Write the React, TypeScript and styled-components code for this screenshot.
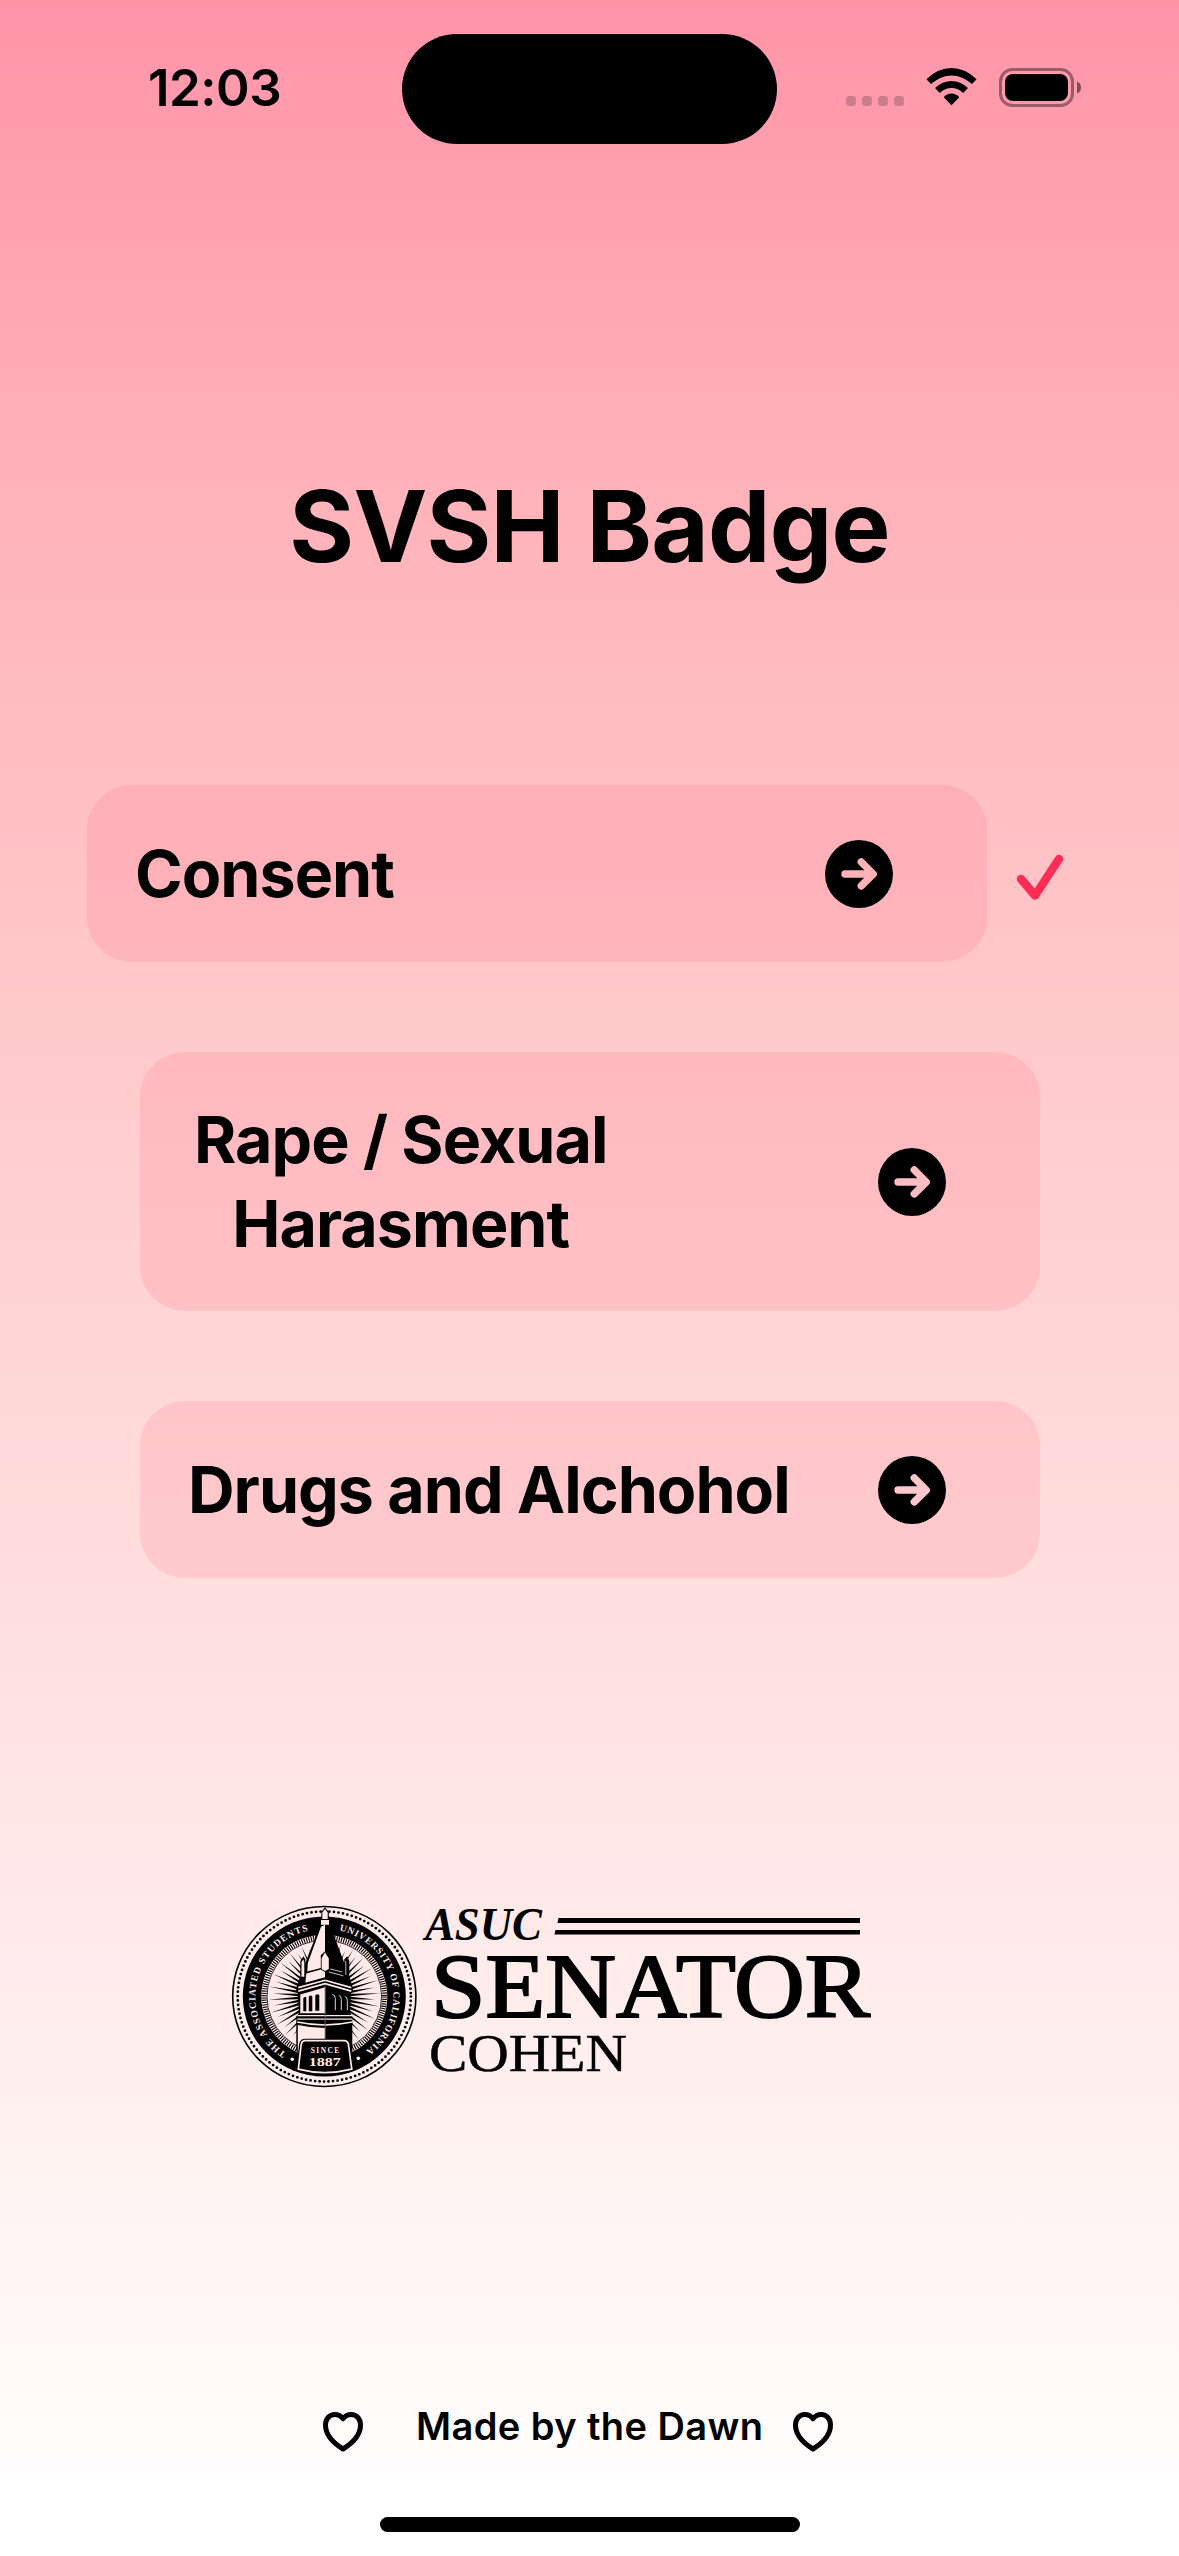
import React, { useId } from "react";
import styled, { createGlobalStyle } from "styled-components";

const Global = createGlobalStyle`
  *{box-sizing:border-box}
  html,body,#root{margin:0;padding:0}
  body{width:1179px;height:2556px;overflow:hidden;font-family:Inter,"Liberation Sans",sans-serif;color:#000}
`;

const Screen = styled.main`
  width: 1179px;
  height: 2556px;
  display: flex;
  flex-direction: column;
  align-items: center;
  background: linear-gradient(180deg, #ff94a9 0, #ffb2ba 480px, #ffc8cb 1000px, #ffdfde 1600px, #fffcfb 2440px, #fff 2500px);
`;

const StatusBar = styled.header`
  width: 100%;
  height: 145px;
  padding-top: 34px;
  display: grid;
  grid-template-columns: 402px 375px 1fr;
`;

const Clock = styled.time`
  padding: 21px 0 0 148px;
  font-size: 51px;
  line-height: 66px;
  font-weight: 600;
  letter-spacing: -0.5px;
`;

const Island = styled.div`
  height: 110px;
  border-radius: 55px;
  background: #000;
`;

const Indicators = styled.div`
  display: flex;
  align-items: flex-start;
  padding: 34px 0 0 69px;
`;

const Dots = styled.div`
  display: flex;
  gap: 6px;
  padding-top: 28px;
  margin-right: 22px;
`;

const Dot = styled.i`
  width: 10px;
  height: 10px;
  border-radius: 3.5px;
  background: rgba(0, 0, 0, 0.2);
`;

const Battery = styled.svg`
  margin-left: 22px;
`;

const Title = styled.h1`
  margin: 321px 0 0;
  height: 120px;
  font-size: 99px;
  line-height: 120px;
  font-weight: 700;
  letter-spacing: -0.75px;
  white-space: nowrap;
`;

const Topics = styled.section`
  width: 100%;
  margin-top: 199px;
  display: flex;
  flex-direction: column;
  gap: 90px;
`;

const TopicRow = styled.div<{ $start: number }>`
  display: flex;
  align-items: center;
  padding-left: ${(p) => p.$start}px;
`;

const Card = styled.button<{ $inset: number; $height: number }>`
  width: 900px;
  height: ${(p) => p.$height}px;
  padding: 0 94px 0 ${(p) => p.$inset}px;
  display: flex;
  align-items: center;
  justify-content: space-between;
  border: 0;
  border-radius: 45px;
  background: rgba(255, 45, 85, 0.11);
  font: inherit;
  color: inherit;
`;

const Label = styled.span`
  font-size: 64.5px;
  line-height: 84px;
  font-weight: 700;
  letter-spacing: -0.97px;
  text-align: center;
  white-space: pre-line;
`;

const Check = styled.svg`
  margin: 8px 0 0 29px;
`;

const Logo = styled.svg`
  display: block;
  width: 680px;
  height: 220px;
  margin: 312px 0 0 220px;
  align-self: flex-start;
`;

const Footer = styled.footer`
  width: 100%;
  height: 60px;
  margin-top: 287px;
  padding: 9px 0 0 323px;
  display: flex;
  align-items: center;
`;

const Credit = styled.span`
  width: 347px;
  margin: 0 30px 0 53px;
  font-size: 38px;
  line-height: 50px;
  font-weight: 600;
  white-space: nowrap;
  letter-spacing: 0.42px;
  padding-bottom: 12px;
`;

const HomeBar = styled.div`
  width: 420px;
  height: 15px;
  margin-top: 60px;
  border-radius: 8px;
  background: #000;
`;

const WifiIcon = () => (
  <svg width="51" height="38" viewBox="0 0 51 38">
    <path d="M0.4 11.2Q12 0 25.5 0Q39 0 50.6 11.2L46 16.1Q36.5 7.4 25.5 7.4Q14.5 7.4 5 16.1Z" />
    <path d="M9 20Q16.5 12.9 25.5 12.9Q34.5 12.9 42 20L37.2 25Q32 20 25.5 20Q19 20 13.8 25Z" />
    <path d="M17.7 29.2Q21 25.6 25.5 25.6Q30 25.6 33.3 29.2L25.5 37.2Z" />
  </svg>
);

const ArrowIcon = () => {
  const id = useId();
  return (
    <svg width="68" height="68" viewBox="0 0 68 68">
      <mask id={id}>
        <rect width="68" height="68" fill="#fff" />
        <path d="M20 34H47M36.3 22L48.2 34L36.3 45.8" fill="none" stroke="#000" strokeWidth="7.4" strokeLinecap="round" strokeLinejoin="round" />
      </mask>
      <circle cx="34" cy="34" r="34" mask={`url(#${id})`} />
    </svg>
  );
};

const HeartIcon = () => (
  <svg width="40" height="40" viewBox="0 0 40 40">
    <path d="M20 6.8C17.6 3.6 14.8 2.5 11.8 2.5C6.3 2.5 2.5 7 2.5 13C2.5 22.5 9.5 30.5 20 37C30.5 30.5 37.5 22.5 37.5 13C37.5 7 33.7 2.5 28.2 2.5C25.2 2.5 22.4 3.6 20 6.8Z" fill="none" stroke="#000" strokeWidth="5" strokeLinejoin="round" />
  </svg>
);

const CREAM = "#ffe9e9";
const RAY_COUNT = 52;
const rays = Array.from({ length: RAY_COUNT }, (_, i) => {
  const a = ((i + 0.5) * Math.PI * 2) / RAY_COUNT;
  const r = i % 2 ? 56 : 51;
  const w = 0.05;
  return `M${Math.cos(a) * r} ${Math.sin(a) * r}L${Math.cos(a - w) * 26} ${Math.sin(a - w) * 26}L${Math.cos(a + w) * 26} ${Math.sin(a + w) * 26}Z`;
}).join("");

const PLAQUE = "M-19 45H20Q23 45 24 48L27.5 74Q0 81 -26 74L-23 48Q-22 45 -19 45Z";

const Seal = () => (
  <g transform="translate(324.3 106.5) scale(1 .982)">
    <defs>
      <path id="arc-left" d="M-38.1 57.5A69 69 0 0 1 -13.5 -67.7" />
      <path id="arc-right" d="M14.9 -67.4A69 69 0 0 1 40.1 56.2" />
    </defs>
    <circle r="91.6" fill="none" stroke="#000" strokeWidth="1.6" />
    <circle r="86.6" fill="none" stroke="#000" strokeWidth="2.8" strokeLinecap="round" strokeDasharray="0 4.535" />
    <circle r="81.5" />
    <circle r="63" fill={CREAM} />
    <circle r="60.2" fill="none" stroke="#000" strokeWidth="5" strokeDasharray="1.100 1.264" />
    <circle r="57.3" fill={CREAM} stroke="#000" strokeWidth=".8" />
    <path d={rays} />
    <circle r="26.5" />
    <g fill={CREAM} fontFamily="Liberation Serif, serif" fontWeight="700" fontSize="9.6">
      <text><textPath href="#arc-left" textLength="160">THE ASSOCIATED STUDENTS</textPath></text>
      <text><textPath href="#arc-right" textLength="157">UNIVERSITY OF CALIFORNIA</textPath></text>
    </g>
    <circle cx="-32" cy="64" r="1.8" fill={CREAM} />
    <circle cx="34" cy="63" r="1.8" fill={CREAM} />
    {/* bell tower silhouette */}
    <path d="M.7 -91L-3 -86V-79H-4.5V-72L-19 -34V-38L-21 -41L-24 -36V-20L-28 -9V-5L-25.5 -2V17L-28 20V56H28V20L26 17V-2L28.5 -5V-9L25 -20V-36L23 -41L20 -38V-34L6 -72V-79H4.5V-86Z" />
    {/* lit left face of the spire and parapet */}
    <path d="M-3.3 -71L.7 -73V-46L-3.5 -42V-29L-17 -25.5L-16.5 -34Z" fill={CREAM} />
    <path d="M-22.8 -35L-21 -38L-20 -35V-20H-22.8Z" fill={CREAM} />
    <path d="M-18 -23.5L-3.5 -27.5L.7 -25V-19.5L-19 -14Z" fill={CREAM} />
    <path d="M-2.7 -28V-39L-1 -42L.7 -45L2.4 -42L4.5 -39V-28L.7 -26Z" fill={CREAM} />
    <path d="M-2 -79V-85.5L.7 -89L3.4 -85.5V-79ZM-3.3 -78H4.7V-73H-3.3Z" fill={CREAM} />
    <path d="M4.5 -25L19 -21M6 -28L18 -25M21.5 -36V-22" fill="none" stroke={CREAM} strokeWidth=".8" />
    <path d="M-26 -9L.7 -16.5L27 -9M-26 -5.5L.7 -13L27 -5.5" fill="none" stroke={CREAM} strokeWidth="1.7" />
    <path d="M-24 -2L.7 -9.5V17H-24Z" fill={CREAM} />
    <path d="M-21 15V2Q-19.5 -1 -18 1V15ZM-15.5 15V0Q-13.5 -2 -12 0V15ZM-9 14.5V-1Q-7 -3.5 -5 -1.5V14.5Z" />
    <path d="M-27 19.5H28M-27 23H28M-27 26Q0 32 28 26" fill="none" stroke={CREAM} strokeWidth="1.4" />
    <path d="M-26.5 29Q-13 32 .7 32V56H-26.5Z" fill={CREAM} />
    <path d="M8 -2Q11 -2 11 2V14M14.5 -1Q17 -1 17 3V14M20.5 0Q23 0 23 4V14" stroke={CREAM} strokeWidth=".9" fill="none" />
    <path d="M.9 -12V45" stroke="#666" strokeWidth="1" />
    <path d={PLAQUE} stroke="#000" strokeWidth="4.2" strokeLinejoin="round" />
    <path d={PLAQUE} stroke={CREAM} strokeWidth="1.7" />
    <g fill={CREAM} fontFamily="Liberation Serif, serif" fontWeight="700">
      <text x="-13.5" y="58" fontSize="7.5" textLength="28.5">SINCE</text>
      <text x="-15.5" y="70.5" fontSize="13.5" textLength="32" lengthAdjust="spacingAndGlyphs">1887</text>
    </g>
  </g>
);

const SenatorLogo = () => (
  <Logo viewBox="220 0 680 220" aria-label="ASUC Senator Cohen">
    <Seal />
    <g fontFamily="Liberation Serif, serif">
      <text x="425" y="50" fontSize="46" fontStyle="italic" fontWeight="700" textLength="117" lengthAdjust="spacingAndGlyphs">ASUC</text>
      <text x="431" y="127" fontSize="91" textLength="439" lengthAdjust="spacingAndGlyphs" stroke="#000" strokeWidth="2">SENATOR</text>
      <text x="429" y="181" fontSize="53" textLength="198" lengthAdjust="spacingAndGlyphs" stroke="#000" strokeWidth=".5">COHEN</text>
    </g>
    <path d="M558.5 28H860V33H557.5ZM555.5 40H860V44.5H554.5Z" />
  </Logo>
);

export default function App() {
  return (
    <Screen>
      <Global />
      <StatusBar>
        <Clock>12:03</Clock>
        <Island />
        <Indicators>
          <Dots><Dot /><Dot /><Dot /><Dot /></Dots>
          <WifiIcon />
          <Battery width="83" height="39" viewBox="0 0 83 39">
            <rect x="1.5" y="1.5" width="72" height="36" rx="12" fill="none" stroke="#000" strokeOpacity=".4" strokeWidth="3" />
            <rect x="6" y="6" width="63" height="27" rx="8" />
            <path d="M78 13.5Q82 15 82 19.5Q82 24 78 25.5Z" fillOpacity=".5" />
          </Battery>
        </Indicators>
      </StatusBar>
      <Title>SVSH Badge</Title>
      <Topics>
        <TopicRow $start={87}>
          <Card $inset={48} $height={177}>
            <Label>Consent</Label>
            <ArrowIcon />
          </Card>
          <Check width="48" height="48" viewBox="0 0 48 48">
            <path d="M5 25L19 41.5L43 5" fill="none" stroke="#ff2d55" strokeWidth="8.5" strokeLinecap="round" strokeLinejoin="round" />
          </Check>
        </TopicRow>
        <TopicRow $start={140}>
          <Card $inset={54} $height={259}>
            <Label>{"Rape / Sexual\nHarasment"}</Label>
            <ArrowIcon />
          </Card>
        </TopicRow>
        <TopicRow $start={140}>
          <Card $inset={48} $height={177}>
            <Label>Drugs and Alchohol</Label>
            <ArrowIcon />
          </Card>
        </TopicRow>
      </Topics>
      <SenatorLogo />
      <Footer>
        <HeartIcon />
        <Credit>Made by the Dawn</Credit>
        <HeartIcon />
      </Footer>
      <HomeBar />
    </Screen>
  );
}
